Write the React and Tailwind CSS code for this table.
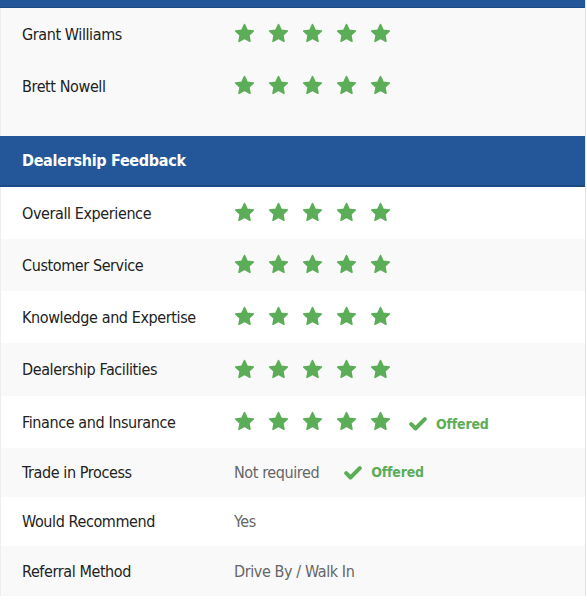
import React from "react";

const Star = () => (
  <svg width="21" height="20" viewBox="0 0 24 23" className="shrink-0">
    <path
      d="M12 1.8l3.1 6.5 7.1.9-5.2 4.9 1.3 7-6.3-3.4-6.3 3.4 1.3-7-5.2-4.9 7.1-.9z"
      fill="#5cad58"
      stroke="#5cad58"
      strokeWidth="1.8"
      strokeLinejoin="round"
    />
  </svg>
);

const Stars = () => (
  <div className="flex items-center gap-[13px] -mt-[2px]">
    {[0, 1, 2, 3, 4].map((i) => (
      <Star key={i} />
    ))}
  </div>
);

const Offered = () => (
  <div className="flex items-center gap-[9px] text-[#5cad58] font-bold text-[14px] tracking-[-0.2px]">
    <svg width="18" height="14" viewBox="0 0 18 14">
      <path
        d="M2.2 7.2l4.3 4.3L15.8 2.2"
        fill="none"
        stroke="#5cad58"
        strokeWidth="4"
        strokeLinecap="round"
        strokeLinejoin="round"
      />
    </svg>
    <span>Offered</span>
  </div>
);

const Row = ({ label, children, gray, h = "h-[52px]" }) => (
  <div className={`flex items-center ${h} ${gray ? "bg-[#f9f9f9]" : "bg-white"}`}>
    <div className="w-[233px] pl-[21px] pt-[1px] text-[#222]">{label}</div>
    <div className="flex items-center">{children}</div>
  </div>
);

const App = () => {
  return (
    <div
      className="w-[586px] border-r border-[#e3e3e3] text-[16px] tracking-[-0.4px] bg-white"
      style={{ fontFamily: "'DejaVu Sans Condensed', 'DejaVu Sans', sans-serif" }}
    >
      <div className="h-[8px] bg-[#23579a] border-b border-[#1c4a85]" />
      <div className="bg-[#f9f9f9] pb-[24px] border-l border-[#eee]">
        <Row label="Grant Williams" gray>
          <Stars />
        </Row>
        <Row label="Brett Nowell" gray>
          <Stars />
        </Row>
      </div>
      <div className="h-[51px] bg-[#23579a] border-b-2 border-[#1c4a85] flex items-center pl-[22px] text-white font-bold tracking-[-0.3px]">
        Dealership Feedback
      </div>
      <div className="border-l border-[#eee]">
        <Row label="Overall Experience">
          <Stars />
        </Row>
        <Row label="Customer Service" gray>
          <Stars />
        </Row>
        <Row label="Knowledge and Expertise">
          <Stars />
        </Row>
        <Row label="Dealership Facilities" gray h="h-[53px]">
          <Stars />
        </Row>
        <Row label="Finance and Insurance">
          <Stars />
          <div className="ml-[18px] mt-[4px]">
            <Offered />
          </div>
        </Row>
        <Row label="Trade in Process" gray h="h-[49px]">
          <span className="text-[#666] pt-[1px]">Not required</span>
          <div className="ml-[25px]">
            <Offered />
          </div>
        </Row>
        <Row label="Would Recommend" h="h-[49px]">
          <span className="text-[#666] pt-[1px]">Yes</span>
        </Row>
        <Row label="Referral Method" gray h="h-[50px]">
          <span className="text-[#666] pt-[1px]">Drive By / Walk In</span>
        </Row>
      </div>
    </div>
  );
};

export default App;
